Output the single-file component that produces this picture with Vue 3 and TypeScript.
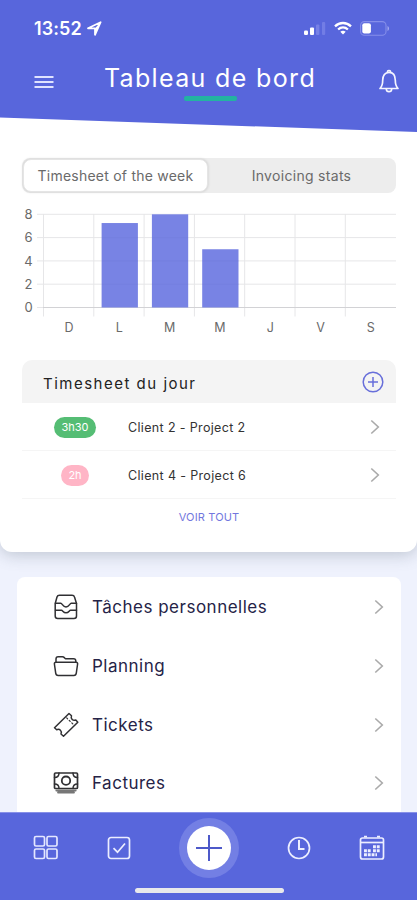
<script setup lang="ts">
interface Day { label: string; hours: number }
interface Entry { duration: string; label: string; tone: string }
interface MenuItem { icon: string; label: string }

const days: Day[] = [
  { label: 'D', hours: 0 },
  { label: 'L', hours: 7.25 },
  { label: 'M', hours: 8 },
  { label: 'M', hours: 5 },
  { label: 'J', hours: 0 },
  { label: 'V', hours: 0 },
  { label: 'S', hours: 0 },
]
const ticks: number[] = [8, 6, 4, 2, 0]
const left = 21.5
const step = 50.3
const yOf = (h: number): number => 103.5 - h * 11.65

const entries: Entry[] = [
  { duration: '3h30', label: 'Client 2 - Project 2', tone: 'green' },
  { duration: '2h', label: 'Client 4 - Project 6', tone: 'pink' },
]
const menu: MenuItem[] = [
  { icon: 'drawer', label: 'Tâches personnelles' },
  { icon: 'folder', label: 'Planning' },
  { icon: 'ticket', label: 'Tickets' },
  { icon: 'cash', label: 'Factures' },
]
</script>

<template>
  <div class="screen">
    <section class="sheet">
      <header class="top">
        <div class="status">
          <span class="time">13:52</span>
          <svg class="loc" width="15" height="15" viewBox="0 0 15 15"><path d="M1 7.3 13.6 1.2 8 13.8V7.3Z" fill="none" stroke="#fff" stroke-width="1.8" stroke-linejoin="round" /><path d="M8 7.3 13.6 1.2 8 13.8Z" fill="#fff" /></svg>
          <svg class="signal" width="22" height="15" viewBox="0 0 22 15"><rect x="0" y="9.5" width="4" height="4.5" rx="1.3" fill="#fff" /><rect x="6" y="6.5" width="4" height="7.5" rx="1" fill="#fff" /><rect x="12" y="3.5" width="3.4" height="10.5" rx="1" fill="#7781e6" /><rect x="18" y="1" width="3.2" height="13" rx="1" fill="#727de5" /></svg>
          <svg class="wifi" width="18" height="14" viewBox="0 0 18 14"><g fill="none" stroke="#fff" stroke-width="2.3"><path d="M1 5.3C5.6.9 12.4.9 17 5.3" /><path d="M4.1 8.5c2.9-2.7 6.9-2.7 9.8 0" /></g><path d="M6.3 10.8c1.6-1.5 3.8-1.5 5.4 0L9 13.6Z" fill="#fff" /></svg>
          <svg class="battery" width="30" height="15" viewBox="0 0 30 15"><rect x=".6" y=".6" width="25.4" height="13.6" rx="3.8" fill="none" stroke="#858eea" stroke-width="1.1" /><rect x="2.3" y="2.2" width="8.6" height="10.4" rx="2" fill="#fff" /><path d="M27.5 5v5c2-.8 2-4.200 0-5Z" fill="#a1a8f0" /></svg>
        </div>
        <div class="titlebar">
          <svg class="burger" width="20" height="14" viewBox="0 0 20 14"><path d="M.5 2h19M.5 7h19M.5 12h19" stroke="#dfe3ff" stroke-width="1.9" /></svg>
          <div class="heading"><h1>Tableau de bord</h1><i></i></div>
          <svg class="bell" width="22" height="25" viewBox="0 0 22 25"><g fill="none" stroke="#f4f5ff" stroke-width="1.7" stroke-linejoin="round" stroke-linecap="round"><path d="M2 19.500c2-2 2.700-3.700 2.700-8.200C4.700 6.500 7 3.300 11 3.300s6.300 3.200 6.300 8c0 4.500.7 6.200 2.700 8.200Z" /><path d="M8.300 20c.2 3.600 5.200 3.600 5.400 0M9.500 2.300c.5-1.100 2.500-1.100 3 0" /></g></svg>
        </div>
      </header>
      <div class="tabs">
        <button class="tab active">Timesheet of the week</button>
        <button class="tab">Invoicing stats</button>
      </div>
      <svg class="chart" width="375" height="136" viewBox="0 0 375 136">
        <g stroke="#e6e6e8">
          <line v-for="t in ticks" :key="t" x1="15" x2="374" :y1="yOf(t)" :y2="yOf(t)" />
          <line v-for="(d, i) in days" :key="i" :x1="left + i * step" :x2="left + i * step" y1="10" y2="112.500" />
        </g>
        <line x1="21" x2="374" y1="103.500" y2="103.500" stroke="#d2d2d5" />
        <g class="ylabel"><text v-for="t in ticks" :key="t" x="6.500" :y="yOf(t) + 4.800">{{ t }}</text></g>
        <g v-for="(d, i) in days" :key="'b' + i">
          <rect v-if="d.hours" :x="left + i * step + 7.800" :y="yOf(d.hours)" width="36.300" :height="yOf(0) - yOf(d.hours)" fill="#7883e4" />
          <text class="xlabel" :x="left + i * step + 25.500" y="128">{{ d.label }}</text>
        </g>
        <g stroke="#7079d9" stroke-opacity=".35"><path d="M80 80.200h36M80 56.900h36M80 33.600h36M130 80.200h36M130 56.900h36M130 33.600h36M180.500 80.200h36M180.500 56.900h36" /></g>
      </svg>
      <div class="day">
        <div class="dayhead">
          <h2>Timesheet du jour</h2>
          <svg width="22" height="22" viewBox="0 0 22 22"><g fill="none" stroke="#686fda" stroke-width="1.5"><circle cx="11" cy="11" r="9.800" /><path d="M11 6v10M6 11h10" /></g></svg>
        </div>
        <div v-for="e in entries" :key="e.label" class="entry">
          <div class="cell"><span class="pill" :class="e.tone">{{ e.duration }}</span></div>
          <span class="project">{{ e.label }}</span>
          <svg class="chev" width="10" height="16" viewBox="0 0 10 16"><path d="m1.300 1.500 7 6.500-7 6.500" fill="none" stroke="#aaa" stroke-width="1.600" /></svg>
        </div>
        <a class="all">VOIR TOUT</a>
      </div>
    </section>

    <nav class="menu">
      <div v-for="m in menu" :key="m.icon" class="item">
        <svg width="26" height="26" viewBox="0 0 26 26">
          <g fill="none" stroke="#303033" stroke-width="1.500" stroke-linejoin="round" stroke-linecap="round">
            <template v-if="m.icon === 'drawer'">
              <path d="M2.200 9.500 4 3Q4.500 1.200 6.500 1.200h12.500q2 0 2.500 1.800L23.500 9.500v12.500q0 2.500-2.500 2.500H4.700q-2.500 0-2.500-2.500Z" />
              <path d="M2.500 9.300h5.300c1.500 0 2 3.700 5.200 3.700s3.700-3.700 5.200-3.700h5.300M2.500 16.300h6c1.300 0 1.600 2.500 4.500 2.500s3.200-2.500 4.500-2.500h6" />
            </template>
            <template v-else-if="m.icon === 'folder'">
              <path d="M3 9.200V6q0-2.200 2.200-2.200h4.300q1 0 1.800.8l.7.700q.6.500 1.500.500h7q2.300 0 2.300 2.200v1.200" />
              <path d="M3 9.200h20q1.800 0 1.600 1.800l-1.300 9.200q-.3 2.200-2.500 2.200H5.200q-2.200 0-2.500-2.200L1.400 11Q1.200 9.200 3 9.200Z" />
            </template>
            <template v-else-if="m.icon === 'ticket'">
              <path d="m1.500 15.800 14.500-14.300 2.500 2.200c-1.200 3 1.500 5.500 4.300 4.300l2 2.200-14.300 14-2.500-2.200c1.300-3-1.400-5.600-4.300-4.300Z" />
              <path d="m13.700 5.900.9.900m1.600 1.500 1 1m1.600 1.500 1 1" stroke-width="1.200" />
            </template>
            <template v-else>
              <rect x="1.500" y="3" width="23" height="15.500" rx="1" stroke-width="1.700" />
              <circle cx="13" cy="10.700" r="4.200" stroke-width="1.800" />
              <path d="M1.500 7.500q4.500 0 4.500-4.500M20 3q0 4.500 4.500 4.500M1.500 14q4.500 0 4.500 4.500M20 18.500q0-4.500 4.500-4.500" />
              <path d="M3.300 20.500h19.400M5 22.500h16" stroke="#777" stroke-width="1.800" />
            </template>
          </g>
        </svg>
        <span class="name">{{ m.label }}</span>
        <svg class="chev" width="10" height="16" viewBox="0 0 10 16"><path d="m1.300 1.500 7 6.500-7 6.500" fill="none" stroke="#aaa" stroke-width="1.600" /></svg>
      </div>
    </nav>

    <footer class="dock">
      <div class="icons">
        <svg class="grid" width="26" height="26" viewBox="0 0 26 26"><g fill="none" stroke="#e4e7ff" stroke-width="1.700"><rect x="1.500" y="1.500" width="10" height="9.500" rx="1.500" /><rect x="14" y="1.500" width="10" height="9.500" rx="1.500" /><rect x="1.500" y="14" width="10" height="9.500" rx="1.500" /><rect x="14" y="14" width="10" height="9.500" rx="1.500" /></g></svg>
        <svg class="check" width="24" height="24" viewBox="0 0 24 24"><g fill="none" stroke="#eceeff" stroke-width="1.700"><rect x="1.500" y="1.500" width="21" height="21" rx="2.500" /><path d="m6.500 12.200 4 4L18 7.500" /></g></svg>
        <div class="fab"><svg width="44" height="44" viewBox="0 0 44 44"><circle cx="22" cy="22" r="22" fill="#fff" /><path d="M22 9v26M9 22h26" stroke="#4d59c9" stroke-width="2" /></svg></div>
        <svg class="clock" width="24" height="24" viewBox="0 0 24 24"><g fill="none" stroke="#eceeff" stroke-width="1.700"><circle cx="12" cy="12" r="10.500" /><path d="M12 4v9h5.500" stroke-width="2" /></g></svg>
        <svg class="cal" width="26" height="26" viewBox="0 0 26 26"><g fill="none" stroke="#eceeff"><rect x="1.500" y="3" width="23" height="21" rx="2" stroke-width="1.700" /><path d="M2 7.500h22" stroke-width="1.700" /><path d="M5 1.700h3M18 1.700h3" stroke-width="1.700" /><path d="M14 11.800h7M14 15.700h7M5 15.700h7M5 19.700h13" stroke-width="2.900" stroke-dasharray="2.900 .9" /></g></svg>
      </div>
      <div class="home"></div>
    </footer>
  </div>
</template>

<style>
body { overflow: hidden; }
</style>
<style scoped>
* { box-sizing: border-box; }
.screen { width: 417px; height: 900px; overflow: hidden; display: flex; flex-direction: column; background: #eff2fd; font-family: Inter, "Liberation Sans", sans-serif; }
svg { display: block; flex: none; }
h1, h2 { margin: 0; font-weight: 400; white-space: nowrap; }
.sheet { flex: none; height: 552px; background: #fff; border-radius: 0 0 12px 12px; box-shadow: 0 3px 16px rgba(90, 105, 120, .32); }
.top { height: 132px; background: #5866dc; clip-path: polygon(0 0, 100% 0, 100% 100%, 0 117.500px); }
.status { display: flex; align-items: center; height: 56px; padding: 0 27px 0 34px; color: #fff; }
.time { font-size: 18px; font-weight: 600; letter-spacing: .1px; }
.loc { margin-left: 5px; }
.signal { margin-left: auto; }
.wifi { margin-left: 8px; }
.battery { margin-left: 8px; }
.titlebar { display: flex; align-items: flex-start; padding: 0 17px 0 34px; }
.burger { margin-top: 19px; }
.heading { display: flex; flex-direction: column; align-items: center; width: 214px; padding-top: 6px; margin-left: 49px; }
h1 { color: #fff; font-size: 25px; line-height: 32px; letter-spacing: 1.350px; }
.heading i { width: 53px; height: 5px; margin-top: 2px; border-radius: 2px; background: #23b3a1; }
.bell { margin: 13px 0 0 auto; }
.tabs { display: flex; margin: 26px 21px 0 22px; height: 35px; padding: 1px; border-radius: 8px; background: #ededed; }
.tab { flex: 1; border: 0; padding: 0 0 1px; background: none; color: #6a6a6a; font: 14px Inter, sans-serif; letter-spacing: .3px; white-space: nowrap; border-radius: 8px; }
.active { background: #fff; flex: 0 0 185px; border: 1px solid #e5e5e5; box-shadow: 0 0 3px rgba(0, 0, 0, .16); letter-spacing: .230px; }
.chart { margin: 11px 0 0 22px; }
.ylabel, .xlabel { font-size: 13px; fill: #6a6a6a; text-anchor: middle; }
.xlabel { font-size: 12.500px; }
.day { margin: 20px 21px 0 22px; }
.dayhead { height: 43px; padding: 0 12px 0 21px; display: flex; align-items: center; justify-content: space-between; background: #f4f4f4; border-radius: 10px 10px 0 0; }
h2 { font-size: 15px; letter-spacing: 1.500px; color: #222; padding-top: 4px; }
.entry { height: 48px; display: flex; align-items: center; padding-right: 16px; border-bottom: 1px solid #f5f5f5; }
.cell { width: 106px; display: flex; justify-content: center; }
.pill { height: 21px; line-height: 20px; padding: 0 7px; border-radius: 11px; color: #fff; font-size: 11px; margin-top: 2px; }
.green { background: #55bd74; }
.pink { background: #ffb5c6; }
.project { padding-top: 1px; font-size: 12.500px; letter-spacing: .350px; color: #333; white-space: nowrap; }
.chev { margin-left: auto; }
.all { display: block; text-align: center; color: #7277de; font-size: 11px; letter-spacing: .150px; line-height: 14px; margin-top: 11px; }
.menu { flex: none; width: 384px; height: 260px; margin: 25px 0 0 17px; padding-top: 1px; border-radius: 8px; background: #fff; }
.item { height: 58.700px; display: flex; align-items: center; padding: 0 17px 0 36px; }
.name { margin-left: 13px; font-size: 17px; letter-spacing: .500px; color: #252347; white-space: nowrap; }
.dock { flex: none; height: 88px; margin-top: -25px; border-top: 1px solid #8790e8; background: #5866dc; }
.icons { height: 70px; display: flex; align-items: center; }
.grid { margin-left: 33px; }
.check { margin-left: 48px; }
.fab { margin-left: 48px; width: 60px; height: 60px; padding: 8px; border-radius: 50%; background: #737fe4; }
.clock { margin-left: 48px; }
.cal { margin-left: 48px; }
.home { width: 149px; height: 5px; margin: 5px auto 0 135px; border-radius: 3px; background: #e9e9eb; }
</style>
